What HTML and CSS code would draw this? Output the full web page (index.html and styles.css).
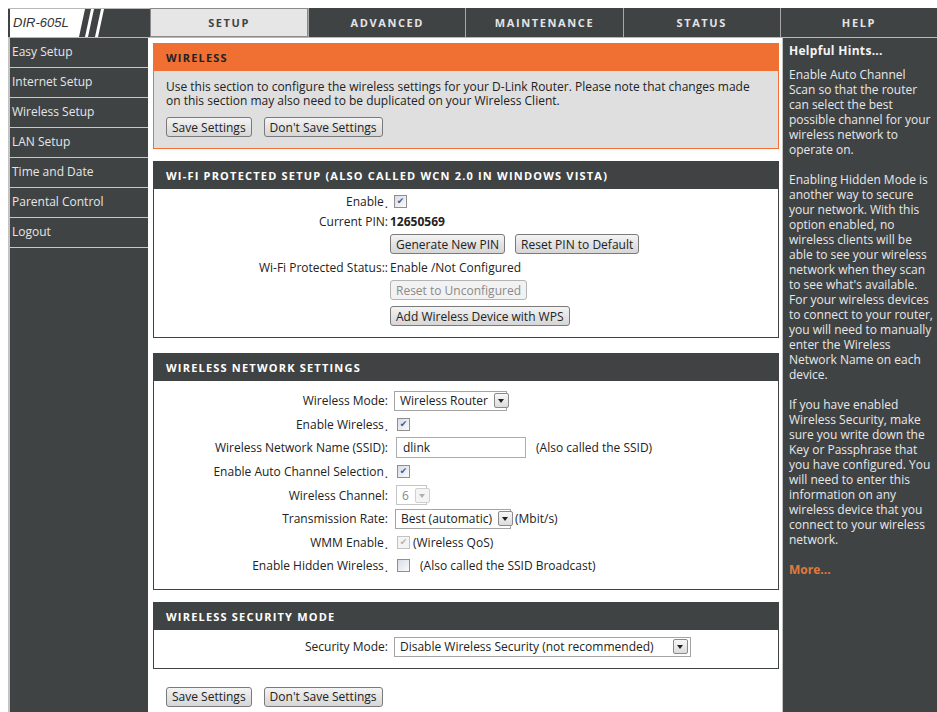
FILE: index.html
```html
<!DOCTYPE html>
<html lang="en">
<head>
  <meta charset="UTF-8">
  <title>D-Link DIR-605L - Wireless Setup</title>
  <link rel="stylesheet" href="styles.css">
</head>
<body>
<div class="page">
  <!-- Top navigation -->
  <div class="topbar">
    <div class="logo">
      <span class="model">DIR-605L</span>
      <svg class="slashes" width="30" height="28" viewBox="0 0 30 28">
        <polygon points="6,28 9,28 15,0 12,0" fill="#fff"/>
        <polygon points="16,28 19,28 25,0 22,0" fill="#fff"/>
      </svg>
    </div>
    <ul class="tabs">
      <li class="active">SETUP</li>
      <li>ADVANCED</li>
      <li>MAINTENANCE</li>
      <li>STATUS</li>
      <li>HELP</li>
    </ul>
  </div>

  <div class="content">
    <!-- Left menu -->
    <ul class="sidebar">
      <li>Easy Setup</li>
      <li>Internet Setup</li>
      <li>Wireless Setup</li>
      <li>LAN Setup</li>
      <li>Time and Date</li>
      <li>Parental Control</li>
      <li>Logout</li>
    </ul>

    <div class="main">
      <!-- Intro -->
      <div class="box intro">
        <div class="box-head">WIRELESS</div>
        <div class="intro-body">
          <p>Use this section to configure the wireless settings for your D-Link Router. Please note that changes made on this section may also need to be duplicated on your Wireless Client.</p>
          <div class="btn-row">
            <button class="btn">Save Settings</button>
            <button class="btn">Don't Save Settings</button>
          </div>
        </div>
      </div>

      <!-- WPS -->
      <div class="box wps-box">
        <div class="box-head">WI-FI PROTECTED SETUP (ALSO CALLED WCN 2.0 IN WINDOWS VISTA)</div>
        <div class="box-body wps">
          <div class="row">
            <label>Enable<span class="dot">.</span></label>
            <div class="val"><span class="check on"></span></div>
          </div>
          <div class="row">
            <label>Current PIN:</label>
            <div class="val tight"><b>12650569</b></div>
          </div>
          <div class="row btns">
            <label></label>
            <div class="val tight">
              <button class="btn">Generate New PIN</button>
              <button class="btn">Reset PIN to Default</button>
            </div>
          </div>
          <div class="row">
            <label>Wi-Fi Protected Status::</label>
            <div class="val tight">Enable /Not Configured</div>
          </div>
          <div class="row btns">
            <label></label>
            <div class="val tight"><button class="btn" disabled>Reset to Unconfigured</button></div>
          </div>
          <div class="row btns">
            <label></label>
            <div class="val tight"><button class="btn">Add Wireless Device with WPS</button></div>
          </div>
        </div>
      </div>

      <!-- Wireless network settings -->
      <div class="box">
        <div class="box-head">WIRELESS NETWORK SETTINGS</div>
        <div class="box-body wns">
          <div class="row">
            <label>Wireless Mode:</label>
            <div class="val">
              <span class="select mode">Wireless Router<span class="arrow"></span></span>
            </div>
          </div>
          <div class="row">
            <label>Enable Wireless<span class="dot">.</span></label>
            <div class="val"><span class="check on"></span></div>
          </div>
          <div class="row">
            <label>Wireless Network Name (SSID):</label>
            <div class="val">
              <span class="textbox">dlink</span>
              <span class="note">(Also called the SSID)</span>
            </div>
          </div>
          <div class="row">
            <label>Enable Auto Channel Selection<span class="dot">.</span></label>
            <div class="val"><span class="check on"></span></div>
          </div>
          <div class="row">
            <label>Wireless Channel:</label>
            <div class="val">
              <span class="select channel disabled">6<span class="arrow"></span></span>
            </div>
          </div>
          <div class="row">
            <label>Transmission Rate:</label>
            <div class="val">
              <span class="select rate">Best (automatic)<span class="arrow"></span></span>
              <span class="unit">(Mbit/s)</span>
            </div>
          </div>
          <div class="row">
            <label>WMM Enable<span class="dot">.</span></label>
            <div class="val">
              <span class="check on disabled"></span>
              <span class="note small">(Wireless QoS)</span>
            </div>
          </div>
          <div class="row">
            <label>Enable Hidden Wireless<span class="dot">.</span></label>
            <div class="val">
              <span class="check"></span>
              <span class="note">(Also called the SSID Broadcast)</span>
            </div>
          </div>
        </div>
      </div>

      <!-- Security -->
      <div class="box">
        <div class="box-head">WIRELESS SECURITY MODE</div>
        <div class="box-body sec">
          <div class="row">
            <label>Security Mode:</label>
            <div class="val">
              <span class="select security">Disable Wireless Security (not recommended)<span class="arrow"></span></span>
            </div>
          </div>
        </div>
      </div>

      <div class="btn-row bottom">
        <button class="btn">Save Settings</button>
        <button class="btn">Don't Save Settings</button>
      </div>
    </div>

    <!-- Help column -->
    <div class="hints">
      <h3>Helpful Hints...</h3>
      <p>Enable Auto Channel Scan so that the router can select the best possible channel for your wireless network to operate on.</p>
      <p>Enabling Hidden Mode is another way to secure your network. With this option enabled, no wireless clients will be able to see your wireless network when they scan to see what's available. For your wireless devices to connect to your router, you will need to manually enter the Wireless Network Name on each device.</p>
      <p>If you have enabled Wireless Security, make sure you write down the Key or Passphrase that you have configured. You will need to enter this information on any wireless device that you connect to your wireless network.</p>
      <p class="more">More...</p>
    </div>
  </div>
</div>
</body>
</html>
```

FILE: styles.css
```css
html, body {
  overflow: hidden;
}

body {
  margin: 0;
  background: #fff;
  color: #222;
  font-family: "Open Sans", "Noto Sans", Arial, sans-serif;
  font-size: 12px;
}

.page {
  margin: 8px 0 0 8px;
  width: 929px;
}

/* Top bar */
.topbar {
  display: flex;
  height: 29px;
  background: #404344;
  border-bottom: 1px solid #b8b8b8;
}

.logo {
  width: 142px;
  display: flex;
  align-items: stretch;
  border-top: 1px solid #b8b8b8;
}

.model {
  width: 72px;
  padding-left: 3px;
  margin-left: 2px;
  background: #fff;
  color: #333;
  font-family: "Liberation Sans", Arial, sans-serif;
  font-style: italic;
  font-size: 13px;
  line-height: 28px;
  clip-path: polygon(0 0, 100% 0, 92% 100%, 0 100%);
}

.slashes {
  margin-left: -6px;
}

.tabs {
  list-style: none;
  margin: 0;
  padding: 0;
  display: flex;
  flex: 1;
}

.tabs li {
  flex: 1;
  border-left: 1px solid #a8a8a8;
  color: #e4e4e4;
  font-weight: bold;
  font-size: 11px;
  letter-spacing: 1.6px;
  text-align: center;
  line-height: 29px;
}

.tabs li.active {
  background: #e6e6e6;
  color: #404344;
  border: 1px solid #8a8a8a;
  line-height: 27px;
}

/* Content columns */
.content {
  display: flex;
  height: 680px;
}

.sidebar {
  list-style: none;
  margin: 0;
  padding: 0;
  width: 138px;
  background: #404344;
  border-left: 2px solid #c4c4c4;
}

.sidebar li {
  height: 29px;
  line-height: 28px;
  padding-left: 2px;
  color: #e6e6e6;
  border-bottom: 1px solid #c8c8c8;
}

.main {
  width: 626px;
  padding: 5px 3px 0 5px;
}

.hints {
  flex: 1;
  background: #404344;
  border-left: 1px solid #c4c4c4;
  padding: 5px 2px 0 6px;
  color: #e8e8e8;
  line-height: 15px;
}

.hints h3 {
  margin: 0 0 9px;
  font-size: 12px;
  font-weight: bold;
  color: #f4f4f4;
  letter-spacing: 0.3px;
}

.hints p {
  margin: 0 0 15px;
}

.hints .more {
  color: #e07a3c;
  font-weight: bold;
}

/* Boxes */
.box {
  border: 1px solid #404344;
  margin-bottom: 12px;
}

.wps-box {
  margin-bottom: 15px;
}

.box-head {
  background: #404344;
  color: #fff;
  height: 27px;
  line-height: 27px;
  padding-left: 12px;
  font-weight: bold;
  font-size: 11px;
  letter-spacing: 1.2px;
}

.intro {
  border-color: #f07034;
}

.intro .box-head {
  background: #f07034;
  color: #222;
}

.intro-body {
  background: #dfdfdf;
  padding: 9px 12px 11px;
}

.intro-body p {
  margin: 0 0 9px;
  line-height: 14px;
  max-width: 600px;
}

.btn-row {
  display: flex;
  gap: 12px;
}

.btn-row.bottom {
  padding: 6px 0 0 13px;
}

/* Form rows */
.box-body {
  background: #fff;
}

.row {
  display: flex;
  align-items: center;
  height: 20px;
}

.row label {
  width: 234px;
  text-align: right;
  color: #222;
}

.dot {
  position: relative;
  top: 2px;
  margin-left: 1px;
}

.val {
  display: flex;
  align-items: center;
  gap: 10px;
  padding-left: 6px;
}

.val.tight {
  padding-left: 2px;
}

.wps {
  padding: 2px 0 8px;
}

.wps .row.btns {
  height: 26px;
}

.wns {
  padding: 8px 0 11px;
}

.wns .row {
  height: 23.6px;
}

.wns .check {
  margin-left: 3px;
}

.sec {
  padding: 5px 0 9px;
}

.sec .row {
  height: 24px;
}

/* Controls */
.btn {
  font-family: inherit;
  font-size: 12px;
  color: #222;
  height: 20px;
  padding: 0 5px;
  border: 1px solid #7a7a7a;
  border-radius: 3px;
  background: linear-gradient(#f4f4f4, #e4e4e4 50%, #d6d6d6);
}

.btn[disabled] {
  color: #8a8a8a;
  border-color: #b4b4b4;
  background: #f2f2f2;
}

.check {
  width: 11px;
  height: 11px;
  border: 1px solid #8e8f8f;
  background: linear-gradient(135deg, #d8dde6, #fafafa);
  display: inline-flex;
  align-items: center;
  justify-content: center;
  color: #3d5a98;
  line-height: 1;
}

.check.on::after {
  content: "\2714";
  font-family: "DejaVu Sans", sans-serif;
  font-size: 9px;
}

.check.disabled {
  border-color: #c2c2c2;
  background: #f4f4f4;
  color: #b0b0b0;
}

.select {
  box-sizing: border-box;
  display: inline-flex;
  align-items: center;
  justify-content: space-between;
  height: 20px;
  border: 1px solid #a5a5a5;
  padding-left: 5px;
  padding-right: 2px;
  gap: 6px;
  white-space: nowrap;
  background: #fff;
}

.select.disabled {
  color: #888;
  border-color: #c6c6c6;
}

.arrow {
  flex: none;
  width: 13px;
  height: 13px;
  border: 1px solid #8a8a8a;
  border-radius: 2px;
  background: linear-gradient(#f8f8f8, #dcdcdc);
  position: relative;
}

.arrow::after {
  content: "";
  position: absolute;
  left: 3px;
  top: 5px;
  border-left: 3.5px solid transparent;
  border-right: 3.5px solid transparent;
  border-top: 4px solid #222;
}

.select.disabled .arrow {
  border-color: #d0d0d0;
  background: #f4f4f4;
}

.select.disabled .arrow::after {
  border-top-color: #b0b0b0;
}

.select.mode {
  width: 113px;
}

.select.channel {
  width: 31px;
  margin-left: 2px;
}

.select.rate {
  width: 116px;
  margin-left: 1px;
}

.select.security {
  width: 297px;
}

.textbox {
  box-sizing: border-box;
  width: 130px;
  height: 21px;
  line-height: 19px;
  border: 1px solid #abadb3;
  padding-left: 6px;
  margin-left: 2px;
}

.note {
  margin-left: 0;
}

.note.small {
  margin-left: -7px;
}

.unit {
  margin-left: -6px;
}
```
